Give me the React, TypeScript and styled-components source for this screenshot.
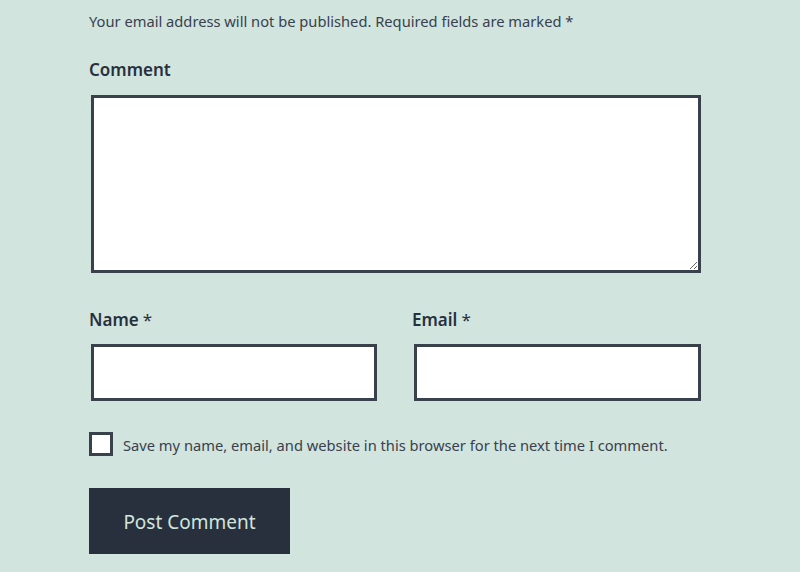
import styled, { createGlobalStyle } from "styled-components";

const GlobalStyle = createGlobalStyle`
    html, body {
        margin: 0;
        padding: 0;
        background: #d1e4de;
    }
    body {
        font-family: "Noto Sans", "Open Sans", sans-serif;
        color: #28303d;
    }
`;

const Page = styled.div`
    width: 800px;
    height: 572px;
    overflow: hidden;
    padding: 0 0 0 89px;
    box-sizing: border-box;
`;

const Form = styled.form`
    width: 614px;
    display: flex;
    flex-direction: column;
`;

const Notes = styled.p`
    margin: 10px 0 0;
    font-size: 14.7px;
    line-height: 22px;
    color: #39414d;
`;

const Field = styled.div<{ $top?: number }>`
    display: flex;
    flex-direction: column;
    margin-top: ${(p) => p.$top ?? 0}px;
`;

const Label = styled.label<{ $gap?: number }>`
    font-size: 17px;
    font-weight: 600;
    line-height: 24px;
    color: #28303d;
    margin-bottom: ${(p) => p.$gap ?? 13}px;
`;

const Star = styled.span`
    font-weight: 400;
    margin-left: 4px;
`;

const TextArea = styled.textarea`
    margin: 0 2px;
    height: 178px;
    box-sizing: border-box;
    border: 3px solid #39414d;
    border-radius: 0;
    background: #fff;
    resize: vertical;
    outline: none;
`;

const Row = styled.div`
    display: grid;
    grid-template-columns: 290px 291px;
    column-gap: 33px;
    margin-top: 35px;
`;

const Input = styled.input`
    margin: 0 2px;
    height: 57px;
    box-sizing: border-box;
    border: 3px solid #39414d;
    border-radius: 0;
    background: #fff;
    outline: none;
`;

const ConsentRow = styled.div`
    display: flex;
    align-items: center;
    gap: 10px;
    margin-top: 30px;
`;

const Box = styled.span`
    width: 24px;
    height: 24px;
    box-sizing: border-box;
    border: 3px solid #39414d;
    background: #fff;
    flex: none;
`;

const ConsentText = styled.span`
    font-size: 14.7px;
    line-height: 22px;
    padding-top: 3px;
    color: #39414d;
`;

const Submit = styled.button`
    margin-top: 32px;
    align-self: flex-start;
    width: 201px;
    height: 66px;
    padding-top: 3px;
    border: none;
    border-radius: 0;
    background: #28303d;
    color: #d1e4de;
    font-family: "Noto Sans", "Open Sans", sans-serif;
    font-size: 19px;
    cursor: pointer;
`;

export default function App() {
    return (
        <Page>
            <GlobalStyle />
            <Form>
                <Notes>
                    Your email address will not be published. Required fields are marked *
                </Notes>
                <Field $top={26}>
                    <Label>Comment</Label>
                    <TextArea />
                </Field>
                <Row>
                    <Field>
                        <Label $gap={12}>
                            Name<Star>*</Star>
                        </Label>
                        <Input type="text" />
                    </Field>
                    <Field>
                        <Label $gap={12}>
                            Email<Star>*</Star>
                        </Label>
                        <Input type="email" />
                    </Field>
                </Row>
                <ConsentRow>
                    <Box />
                    <ConsentText>
                        Save my name, email, and website in this browser for the next time I comment.
                    </ConsentText>
                </ConsentRow>
                <Submit type="button">Post Comment</Submit>
            </Form>
        </Page>
    );
}
